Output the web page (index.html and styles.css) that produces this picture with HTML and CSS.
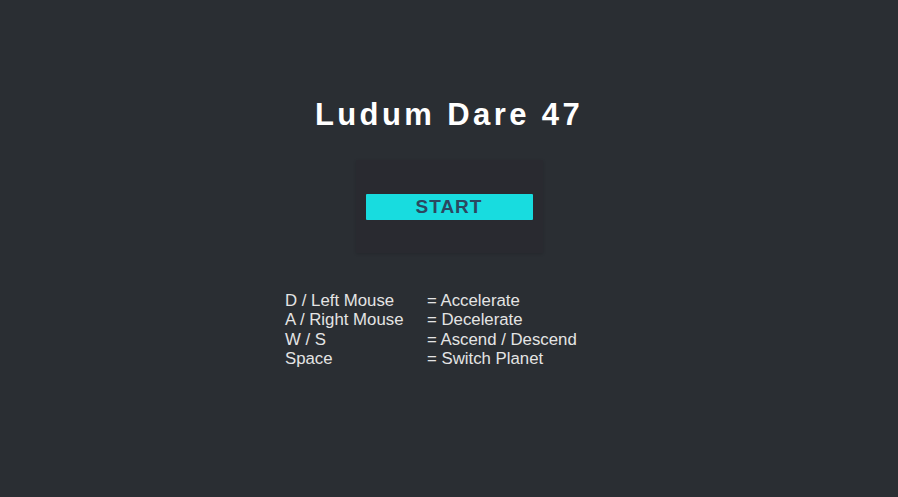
FILE: index.html
```html
<!DOCTYPE html>
<html>
<head>
<meta charset="utf-8">
<link rel="stylesheet" href="styles.css">
</head>
<body>
<main class="screen">
  <h1 class="title">Ludum Dare 47</h1>
  <div class="panel">
    <button class="start">START</button>
  </div>
  <div class="controls">
    <span>D / Left Mouse</span><span>= Accelerate</span>
    <span>A / Right Mouse</span><span>= Decelerate</span>
    <span>W / S</span><span>= Ascend / Descend</span>
    <span>Space</span><span>= Switch Planet</span>
  </div>
</main>
</body>
</html>
```
FILE: styles.css
```css
html, body {
  margin: 0;
  padding: 0;
  background: #2a2e33;
  height: 100%;
}
.screen {
  height: 497px;
  display: flex;
  flex-direction: column;
  align-items: center;
  font-family: "Liberation Sans", Arial, sans-serif;
}
.title {
  margin: 95px 0 0 0;
  font-size: 31px;
  font-weight: bold;
  letter-spacing: 3.4px;
  color: #ffffff;
  line-height: 40px;
  font-family: "Liberation Sans", Arial, sans-serif;
}
.panel {
  margin-top: 25px;
  width: 187px;
  height: 93px;
  background: #292a30;
  display: flex;
  align-items: center;
  justify-content: center;
  box-shadow: 0 1px 3px rgba(0,0,0,0.15);
}
.start {
  width: 167px;
  height: 26px;
  border: none;
  border-radius: 1px;
  background: #18dcdf;
  color: #2c4760;
  font-family: "Liberation Sans", Arial, sans-serif;
  font-weight: bold;
  font-size: 19px;
  letter-spacing: 1px;
  padding: 0;
  margin-top: 0;
}
.controls {
  margin-top: 38px;
  display: grid;
  grid-template-columns: 142px auto;
  font-size: 16.8px;
  line-height: 19.3px;
  color: #e4e4e4;
  align-self: flex-start;
  margin-left: 285px;
}
```
